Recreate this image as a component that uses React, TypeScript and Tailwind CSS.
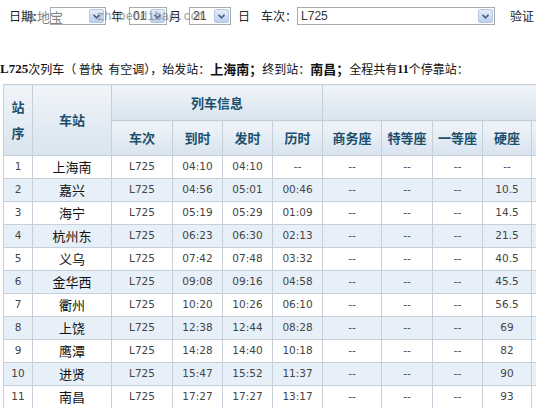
import React from "react";

const rows = [
  ["1", "上海南", "L725", "04:10", "04:10", "--", "--", "--", "--", "--"],
  ["2", "嘉兴", "L725", "04:56", "05:01", "00:46", "--", "--", "--", "10.5"],
  ["3", "海宁", "L725", "05:19", "05:29", "01:09", "--", "--", "--", "14.5"],
  ["4", "杭州东", "L725", "06:23", "06:30", "02:13", "--", "--", "--", "21.5"],
  ["5", "义乌", "L725", "07:42", "07:48", "03:32", "--", "--", "--", "40.5"],
  ["6", "金华西", "L725", "09:08", "09:16", "04:58", "--", "--", "--", "45.5"],
  ["7", "衢州", "L725", "10:20", "10:26", "06:10", "--", "--", "--", "56.5"],
  ["8", "上饶", "L725", "12:38", "12:44", "08:28", "--", "--", "--", "69"],
  ["9", "鹰潭", "L725", "14:28", "14:40", "10:18", "--", "--", "--", "82"],
  ["10", "进贤", "L725", "15:47", "15:52", "11:37", "--", "--", "--", "90"],
  ["11", "南昌", "L725", "17:27", "17:27", "13:17", "--", "--", "--", "93"],
];

const widths = [29, 79, 61, 50, 50, 50, 59, 51, 50, 49, 90];

function Sel({ w, text }: { w: number; text: string }) {
  return (
    <div
      className="h-[18px] border border-[#a5acb5] bg-white flex items-center justify-between pl-[3px] pr-[1px]"
      style={{ width: w }}
    >
      <span className="text-[12px] text-[#333] font-['Liberation_Sans',sans-serif]">{text}</span>
      <div className="w-[15px] h-[14px] rounded-[2px] border border-[#b8c9e4] bg-gradient-to-b from-[#e3ecfa] to-[#bccff0] flex items-center justify-center">
        <svg width="7" height="5" viewBox="0 0 7 5">
          <path d="M0.5 0.8 L3.5 3.8 L6.5 0.8" stroke="#4d6185" strokeWidth="1.6" fill="none" />
        </svg>
      </div>
    </div>
  );
}

export default function App() {
  const th =
    "border border-[#c6d0da] bg-gradient-to-b from-[#f1f5f9] to-[#d8e4ef] text-[#1b4f6c] font-bold text-[13px] text-center p-0";
  return (
    <div className="w-[536px] h-[408px] overflow-hidden bg-white relative font-['Noto_Sans_CJK_SC',sans-serif]">
      <div className="h-[32px] flex items-center text-[12px] text-[#222]">
        <span className="ml-[9px] w-[41px]">日期:</span>
        <Sel w={56} text="" />
        <span className="ml-[5px]">年</span>
        <div className="ml-[6px]"><Sel w={38} text="01" /></div>
        <span className="ml-[2px]">月</span>
        <div className="ml-[8px]"><Sel w={42} text="21" /></div>
        <span className="ml-[7px]">日</span>
        <span className="ml-[11px]">车次：</span>
        <div className="ml-[0px]"><Sel w={198} text="L725" /></div>
        <span className="ml-[15px]">验证</span>
      </div>
      <div className="absolute left-[24px] top-[7px] text-[13px] text-[#666] opacity-80 pointer-events-none">本地宝</div>
      <div className="absolute left-[97px] top-[8px] text-[12px] text-[#8a8a8a] opacity-80 font-['Liberation_Mono',monospace] pointer-events-none">zh.bendibao.com</div>

      <div className="h-[26px] mt-[24px] flex items-center text-[12px] text-[#111] whitespace-nowrap">
        <span className="font-bold font-['Liberation_Serif',serif] text-[13px]">L725</span>
        <span>次列车（ 普快&nbsp;&nbsp;有空调），始发站：</span>
        <span className="font-bold text-[13px]">上海南；</span>
        <span>终到站：</span>
        <span className="font-bold text-[13px]">南昌；</span>
        <span>全程共有</span>
        <span className="font-bold font-['Liberation_Serif',serif]">11</span>
        <span>个停靠站：</span>
      </div>

      <table className="mt-[2px] ml-[3px] border-collapse table-fixed" style={{ width: 618 }}>
        <colgroup>
          {widths.map((w, i) => (
            <col key={i} style={{ width: w }} />
          ))}
        </colgroup>
        <thead>
          <tr className="h-[36px]">
            <th rowSpan={2} className={th + " leading-[26px]"}>站<br />序</th>
            <th rowSpan={2} className={th}>车站</th>
            <th colSpan={4} className={th}>列车信息</th>
            <th colSpan={5} className={th}></th>
          </tr>
          <tr className="h-[35px]">
            {["车次", "到时", "发时", "历时", "商务座", "特等座", "一等座", "硬座", "软座"].map((h, i) => (
              <th key={i} className={th + (h === "硬座" ? " border-t-white" : "")}>{h}</th>
            ))}
          </tr>
        </thead>
        <tbody>
          {rows.map((r, ri) => (
            <tr key={ri} className={"h-[23px] " + (ri % 2 === 1 ? "bg-[#e7f0f8]" : "bg-white")}>
              {[...r, "--"].map((c, ci) => (
                <td
                  key={ci}
                  className={
                    "border border-[#c6d0da] text-center p-0 " +
                    (ci === 1
                      ? "text-[13px] text-[#111]"
                      : "text-[10.5px] text-[#444] font-['DejaVu_Sans',sans-serif]")
                  }
                >
                  {c}
                </td>
              ))}
            </tr>
          ))}
        </tbody>
      </table>
    </div>
  );
}
